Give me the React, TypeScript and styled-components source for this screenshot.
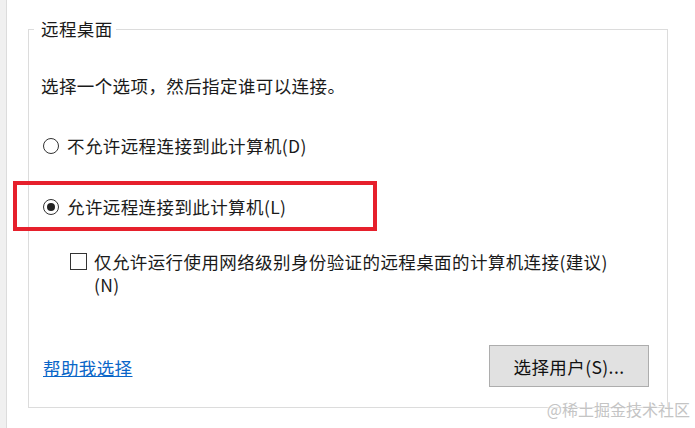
import React from "react";
import styled, { createGlobalStyle } from "styled-components";

const Global = createGlobalStyle`
  html, body { margin: 0; padding: 0; background: #ffffff; }
  body { font-family: "Noto Sans CJK SC", "Noto Sans", sans-serif; color: #1a1a1a; }
`;

const Page = styled.div`
  display: flex;
  width: 695px;
  height: 428px;
  overflow: hidden;
  position: relative;
  background: #fff;
  letter-spacing: 0.4px;
`;

const Strip = styled.div`
  width: 6px;
  flex: none;
  background: #f0f0f0;
  border-right: 1px solid #dcdcdc;
`;

const Group = styled.fieldset`
  position: relative;
  box-sizing: border-box;
  margin: 17px 0 0 21px;
  width: 640px;
  height: 391px;
  padding: 0;
  border: 1px solid #dcdcdc;
  display: flex;
  flex-direction: column;
`;

const Legend = styled.legend`
  margin-left: 5px;
  padding: 0 3px 0 7px;
  font-size: 17.5px;
  line-height: 24px;
  color: #1a1a1a;
`;

const Body = styled.div`
  display: flex;
  flex-direction: column;
  padding: 0 18px 0 14px;
  flex: 1;
`;

const Text = styled.div<{ $mt: number }>`
  margin-top: ${(p) => p.$mt}px;
  margin-left: -2px;
  font-size: 17.5px;
  line-height: 24px;
`;

const RadioRow = styled.label<{ $mt: number }>`
  position: relative;
  display: flex;
  align-items: center;
  gap: 8px;
  height: 24px;
  margin-top: ${(p) => p.$mt}px;
  font-size: 17.5px;
  line-height: 24px;
`;

const RadioCircle = styled.span<{ $checked?: boolean }>`
  box-sizing: border-box;
  width: 16px;
  height: 16px;
  flex: none;
  border-radius: 50%;
  border: 1px solid #333;
  background: #fff;
  display: flex;
  align-items: center;
  justify-content: center;
  &::after {
    content: "";
    display: ${(p) => (p.$checked ? "block" : "none")};
    width: 8px;
    height: 8px;
    border-radius: 50%;
    background: #222;
  }
`;

const Highlight = styled.span`
  position: absolute;
  left: -30px;
  top: -14px;
  width: 364px;
  height: 50px;
  box-sizing: border-box;
  border: 4px solid #e6202c;
  pointer-events: none;
`;

const CheckRow = styled.label`
  display: flex;
  align-items: flex-start;
  gap: 7px;
  margin-top: 31px;
  margin-left: 27px;
  font-size: 17.5px;
  line-height: 23px;
`;

const CheckBox = styled.span`
  box-sizing: border-box;
  width: 17px;
  height: 17px;
  flex: none;
  margin-top: 3px;
  border: 1px solid #333;
  background: #fff;
`;

const CheckText = styled.span`
  width: 530px;
`;

const Footer = styled.div`
  display: flex;
  align-items: center;
  justify-content: space-between;
  margin-top: 49px;
  height: 42px;
`;

const Link = styled.a`
  color: #0a66c8;
  text-decoration: underline;
  font-size: 17.5px;
  line-height: 24px;
  margin-top: 3px;
  cursor: pointer;
`;

const Button = styled.button`
  box-sizing: border-box;
  width: 160px;
  height: 42px;
  background: #e1e1e1;
  border: 1px solid #adadad;
  font-family: "Noto Sans CJK SC", "Noto Sans", sans-serif;
  font-size: 17.5px;
  letter-spacing: 0.4px;
  color: #111;
  padding: 0;
`;

const Watermark = styled.div`
  position: absolute;
  right: 5px;
  top: 398px;
  font-size: 16px;
  line-height: 22px;
  letter-spacing: 0;
  color: #c4c4c4;
  text-shadow: 0 0 2px #fff, 0 0 2px #fff;
`;

export default function App() {
  return (
    <>
      <Global />
      <Page>
        <Strip />
        <Group>
          <Legend>远程桌面</Legend>
          <Body>
            <Text $mt={33}>选择一个选项，然后指定谁可以连接。</Text>
            <RadioRow $mt={36}>
              <RadioCircle />
              不允许远程连接到此计算机(D)
            </RadioRow>
            <RadioRow $mt={37}>
              <RadioCircle $checked />
              允许远程连接到此计算机(L)
              <Highlight />
            </RadioRow>
            <CheckRow>
              <CheckBox />
              <CheckText>仅允许运行使用网络级别身份验证的远程桌面的计算机连接(建议)(N)</CheckText>
            </CheckRow>
            <Footer>
              <Link>帮助我选择</Link>
              <Button>选择用户(S)...</Button>
            </Footer>
          </Body>
        </Group>
        <Watermark>@稀土掘金技术社区</Watermark>
      </Page>
    </>
  );
}
